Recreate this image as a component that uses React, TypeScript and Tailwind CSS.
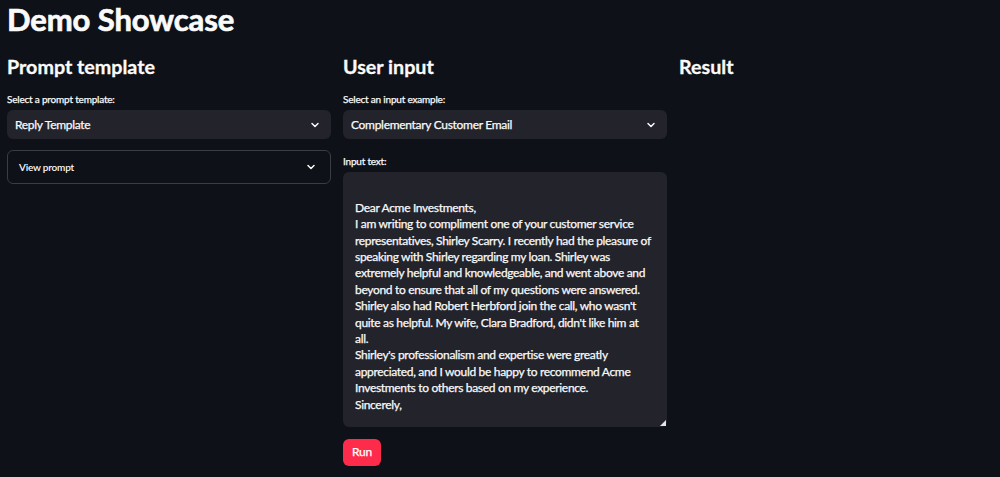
import React from "react";

const font = { fontFamily: "'Source Sans Pro', Lato, 'Noto Sans', sans-serif" };

function Chevron() {
  return (
    <svg width="12" height="12" viewBox="0 0 24 24" fill="none" stroke="#fafafa" strokeWidth="3" strokeLinecap="round" strokeLinejoin="round">
      <path d="M6 9l6 6 6-6" />
    </svg>
  );
}

function Select({ label, value }: { label: string; value: string }) {
  return (
    <div className="flex flex-col">
      <div className="text-[10px] leading-[14px] tracking-[-0.2px] text-[#fafafa] mb-[5px] h-[14px] pt-[1px] [-webkit-text-stroke:0.25px_#fafafa]">{label}</div>
      <div className="h-[29px] rounded-[6px] bg-[#22232b] flex items-center justify-between pl-[8px] pr-[10px]">
        <span className="text-[12px] tracking-[-0.3px] text-[#fafafa] [-webkit-text-stroke:0.25px_#fafafa]">{value}</span>
        <Chevron />
      </div>
    </div>
  );
}

const lines = [
  "",
  "Dear Acme Investments,",
  "I am writing to compliment one of your customer service",
  "representatives, Shirley Scarry. I recently had the pleasure of",
  "speaking with Shirley regarding my loan. Shirley was",
  "extremely helpful and knowledgeable, and went above and",
  "beyond to ensure that all of my questions were answered.",
  "Shirley also had Robert Herbford join the call, who wasn't",
  "quite as helpful. My wife, Clara Bradford, didn't like him at",
  "all.",
  "Shirley's professionalism and expertise were greatly",
  "appreciated, and I would be happy to recommend Acme",
  "Investments to others based on my experience.",
  "Sincerely,",
];

export default function App() {
  return (
    <div className="w-[1000px] h-[477px] bg-[#0e1117] text-[#fafafa] overflow-hidden" style={font}>
      <div className="pl-[7px] pt-[1px]">
        <h1 className="text-[31px] leading-[36px] font-bold tracking-[-0.1px] [-webkit-text-stroke:0.7px_#fafafa]">Demo Showcase</h1>
      </div>
      <div className="grid grid-cols-[324px_324px_321px] gap-x-[12px] pl-[7px] mt-[17px]">
        <div className="flex flex-col">
          <h2 className="text-[19.7px] leading-[26px] font-bold [-webkit-text-stroke:0.3px_#fafafa]">Prompt template</h2>
          <div className="mt-[11px]">
            <Select label="Select a prompt template:" value="Reply Template" />
          </div>
          <div className="mt-[11px] h-[34px] rounded-[6px] border border-[#3b3c45] flex items-center justify-between pl-[11px] pr-[13px]">
            <span className="text-[10px] tracking-[-0.2px] font-semibold">View prompt</span>
            <Chevron />
          </div>
        </div>
        <div className="flex flex-col">
          <h2 className="text-[19.7px] leading-[26px] font-bold [-webkit-text-stroke:0.3px_#fafafa]">User input</h2>
          <div className="mt-[11px]">
            <Select label="Select an input example:" value="Complementary Customer Email" />
          </div>
          <div className="text-[10px] tracking-[-0.2px] leading-[14px] mt-[14px] mb-[5px] h-[14px] pt-[1px] [-webkit-text-stroke:0.25px_#fafafa]">Input text:</div>
          <div className="relative h-[255px] rounded-[6px] bg-[#22232b] px-[12px] pt-[11.5px]">
            <div className="text-[12px] tracking-[-0.32px] leading-[16.4px] [-webkit-text-stroke:0.25px_#fafafa]">
              {lines.map((l, i) => (
                <div key={i} className="whitespace-pre h-[16.4px]">{l}</div>
              ))}
            </div>
            <svg className="absolute right-[1px] bottom-[1px]" width="6" height="6" viewBox="0 0 6 6">
              <path d="M6 0 L6 6 L0 6 Z" fill="#e5e5e5" />
            </svg>
          </div>
          <div className="mt-[11px]">
            <button className="h-[27px] w-[38px] rounded-[6px] bg-[#ff2b4b] text-white text-[12px] tracking-[-0.2px] [-webkit-text-stroke:0.25px_#ffffff]">Run</button>
          </div>
        </div>
        <div className="flex flex-col">
          <h2 className="text-[19.7px] leading-[26px] font-bold [-webkit-text-stroke:0.3px_#fafafa]">Result</h2>
        </div>
      </div>
    </div>
  );
}
